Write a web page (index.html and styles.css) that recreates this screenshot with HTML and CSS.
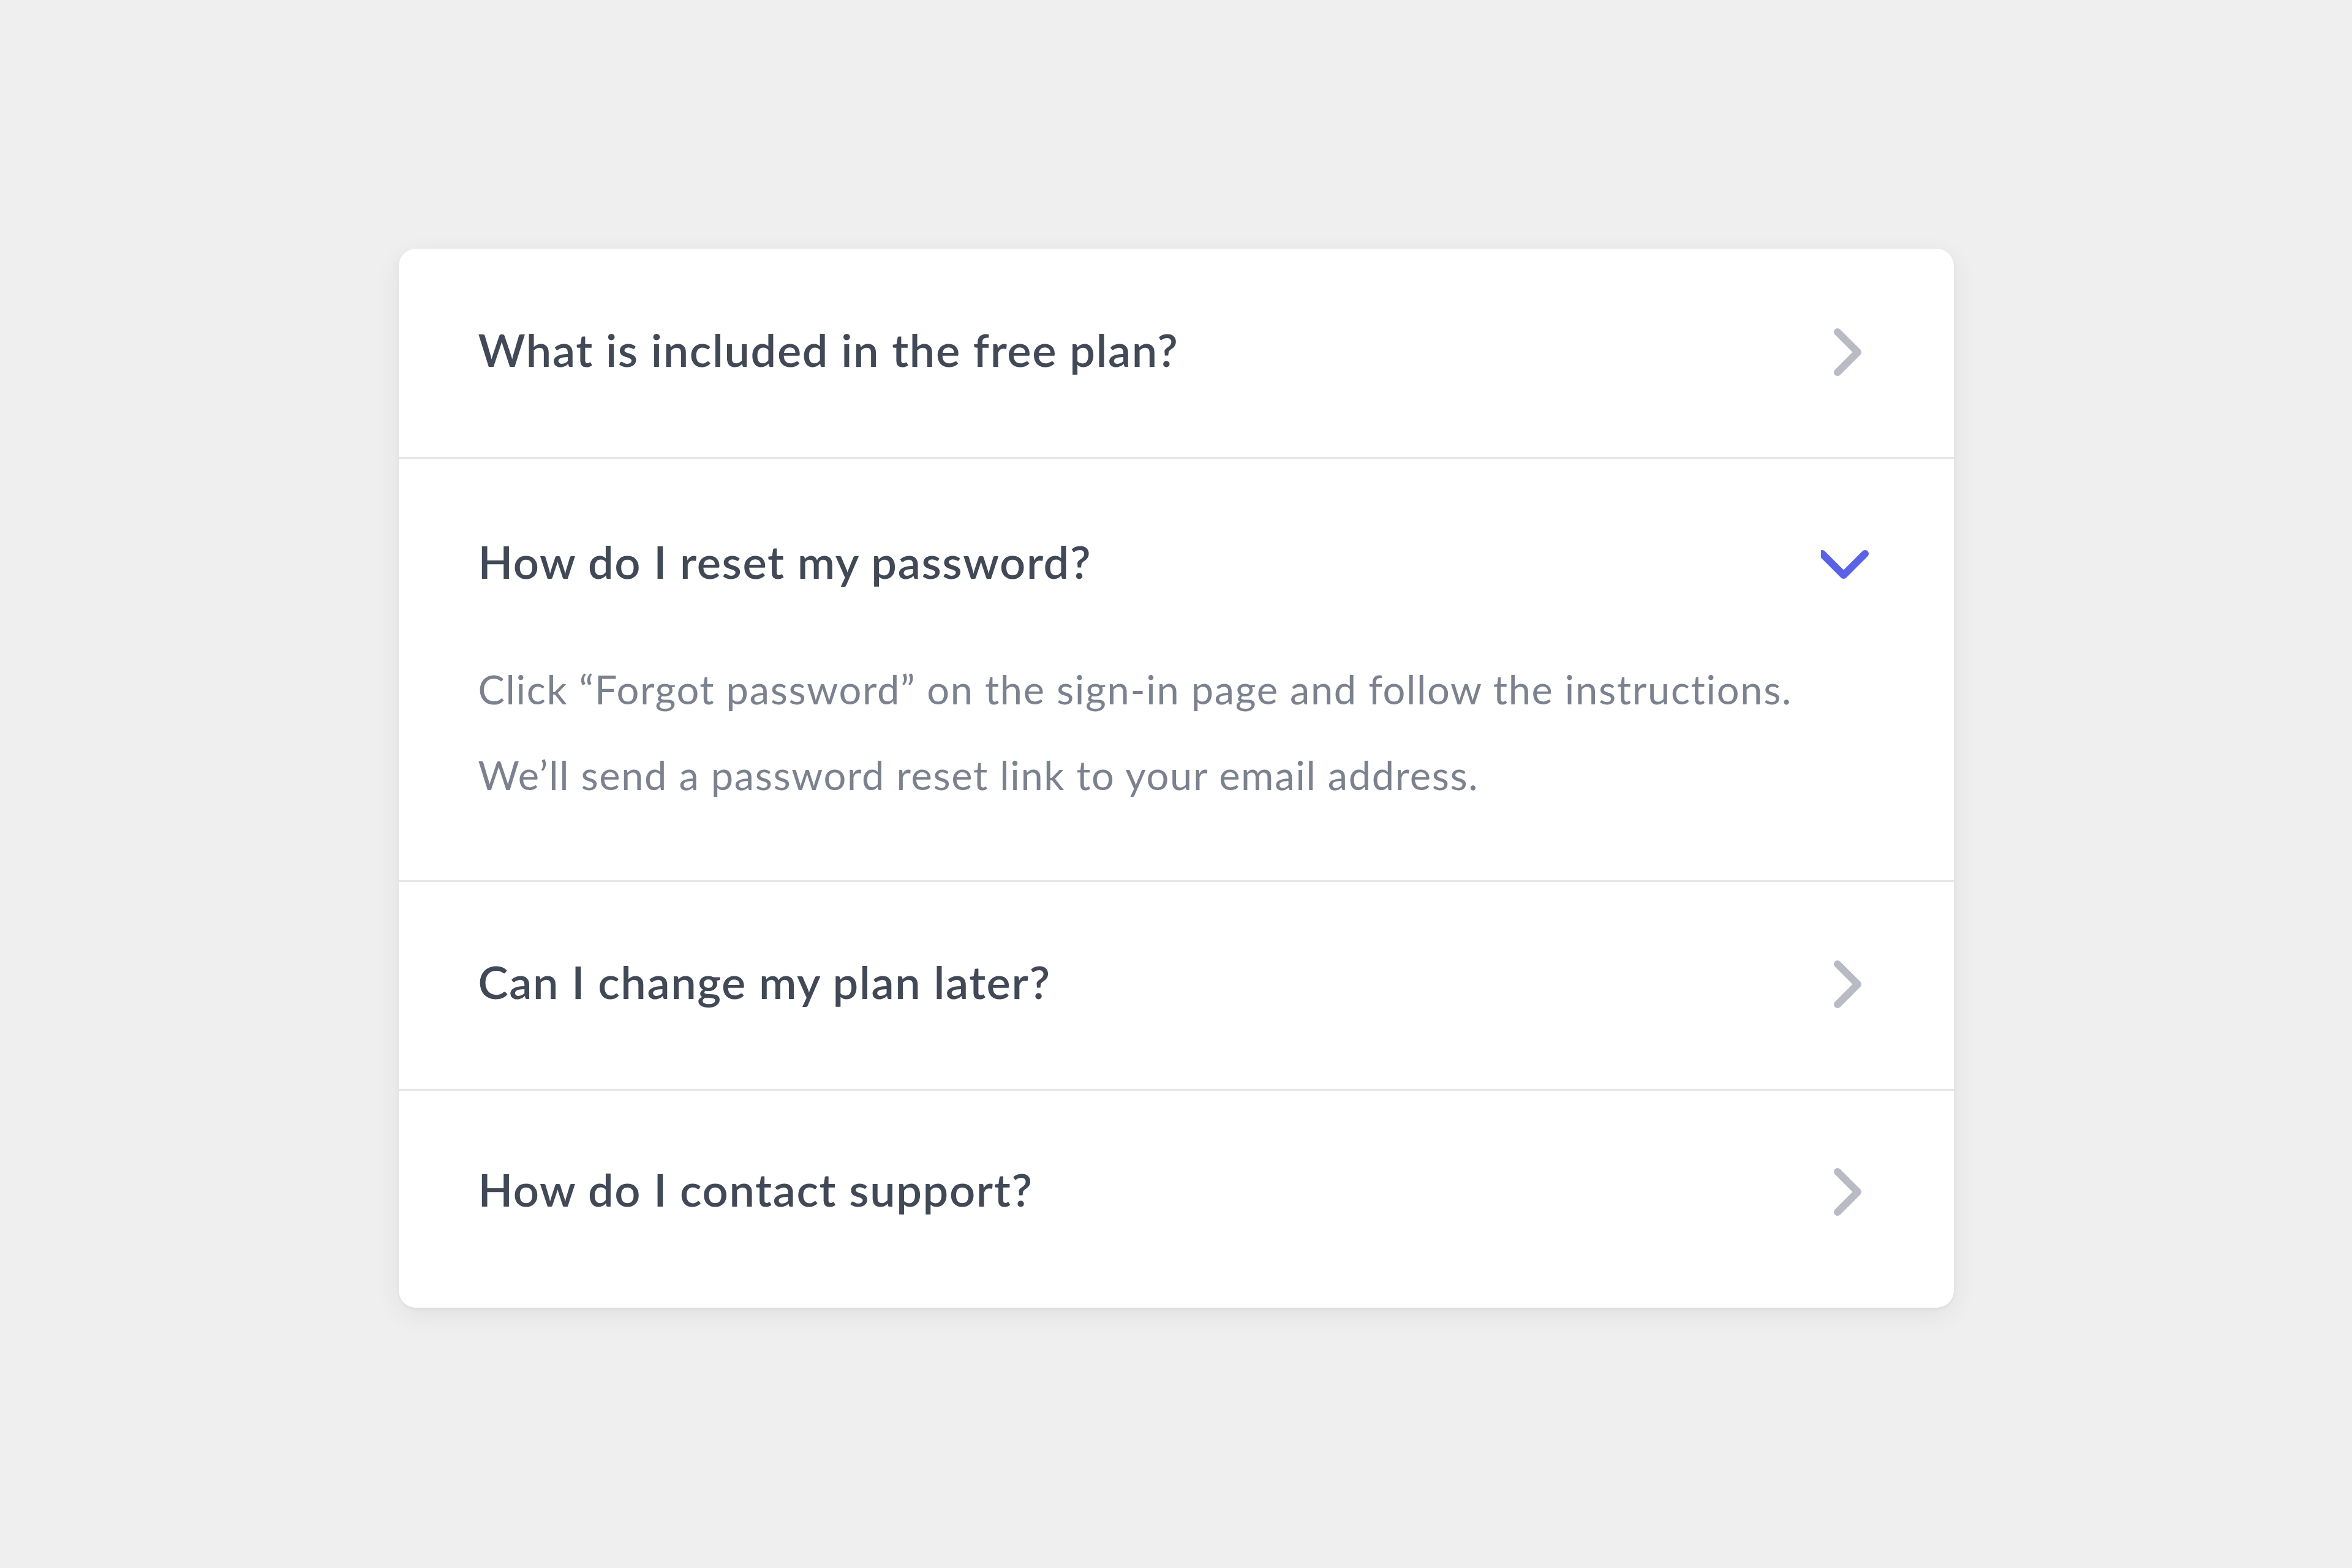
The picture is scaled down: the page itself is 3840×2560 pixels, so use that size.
FILE: index.html
```html
<!DOCTYPE html>
<html lang="en">
<head>
<meta charset="utf-8">
<title>FAQ</title>
<link rel="stylesheet" href="styles.css">
</head>
<body>
<main class="page">
  <section class="faq">
    <div class="item">
      <div class="question">
        <h3 class="q-text">What is included in the free plan?</h3>
        <svg class="icon" viewBox="0 0 80 80"><path class="chev-r" d="M27 8 L60 41 L27 74"/></svg>
      </div>
    </div>
    <div class="item open">
      <div class="question">
        <h3 class="q-text">How do I reset my password?</h3>
        <svg class="icon" viewBox="0 0 80 80"><path class="chev-d" d="M2 27 L37 62 L72 27"/></svg>
      </div>
      <div class="answer">
        <p>Click “Forgot password” on the sign-in page and follow the instructions.</p>
        <p>We’ll send a password reset link to your email address.</p>
      </div>
    </div>
    <div class="item">
      <div class="question">
        <h3 class="q-text">Can I change my plan later?</h3>
        <svg class="icon" viewBox="0 0 80 80"><path class="chev-r" d="M27 8 L60 41 L27 74"/></svg>
      </div>
    </div>
    <div class="item last">
      <div class="question">
        <h3 class="q-text">How do I contact support?</h3>
        <svg class="icon" viewBox="0 0 80 80"><path class="chev-r" d="M27 8 L60 41 L27 74"/></svg>
      </div>
    </div>
  </section>
</main>
</body>
</html>
```

FILE: styles.css
```css
html, body {
  margin: 0;
  padding: 0;
}
body {
  background: #efeff0;
  font-family: Lato, "Open Sans", "Liberation Sans", sans-serif;
  min-height: 2560px;
}
.page {
  display: flex;
  justify-content: center;
  padding-top: 406px;
}
.faq {
  width: 2539px;
  background: #ffffff;
  border-radius: 28px;
  box-shadow: 0 12px 40px rgba(40, 44, 60, 0.07), 0 2px 6px rgba(40, 44, 60, 0.05);
  padding-bottom: 14px;
  overflow: hidden;
}
.item + .item {
  border-top: 3px solid #e6e6ea;
}
.question {
  display: flex;
  align-items: center;
  justify-content: space-between;
  padding: 115px 137px 125px 130px;
}
.item + .item .question {
  padding-top: 113px;
  padding-bottom: 125px;
}
.item.open .question {
  padding-top: 118px;
  padding-bottom: 88px;
}
.item.last .question {
  padding-top: 111px;
  padding-bottom: 129px;
}
.q-text {
  margin: 0;
  font-size: 74px;
  line-height: 100px;
  font-weight: 600;
  letter-spacing: 1.6px;
  color: #414856;
}
.icon {
  width: 80px;
  height: 80px;
  flex: none;
}
.question .icon {
  margin-top: 6px;
}
.item.open .question .icon {
  margin-top: 0;
}
.icon path {
  fill: none;
  stroke-width: 12;
  stroke-linecap: round;
  stroke-linejoin: round;
}
.chev-r {
  stroke: #b8bbc3;
}
.chev-d {
  stroke: #5a62e6;
}
.answer {
  padding: 0 137px 102px 130px;
}
.answer p {
  margin: 0;
  font-size: 65px;
  line-height: 140px;
  letter-spacing: 1.65px;
  color: #7b818e;
}
```
